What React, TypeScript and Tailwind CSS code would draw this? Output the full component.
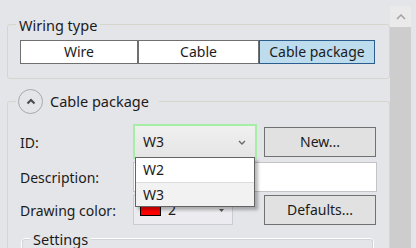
import React from "react";

const font = "font-['Noto_Sans',_sans-serif]";

function Segment({ label, active, w }: { label: string; active?: boolean; w: string }) {
  return (
    <div
      className={`${w} h-[24px] flex items-center justify-center border ${
        active ? "bg-[#bddcee] border-[#2c5d8f]" : "bg-white border-[#707070]"
      }`}
    >
      <span className="leading-none">{label}</span>
    </div>
  );
}

function Btn({ label }: { label: string }) {
  return (
    <div className="w-[112px] h-[30px] flex items-center justify-center border border-[#707070] bg-[#e1e1e1]">
      <span className="leading-none">{label}</span>
    </div>
  );
}

export default function App() {
  return (
    <div className={`w-[416px] h-[248px] bg-[#e4e5e9] flex overflow-hidden text-[14px] text-[#1b1b1b] ${font}`}>
      {/* content */}
      <div className="w-[390px] shrink-0 flex flex-col pt-[24px]">
        {/* Wiring type */}
        <div className="relative shrink-0 ml-[7px] w-[383px] h-[55px] border border-[#d6d6cf] rounded-[3px] pl-[12px] pt-[15px]">
          <div className="absolute left-[8px] top-[-10px] h-[20px] px-[3px] bg-[#e4e5e9] flex items-center">
            <span className="leading-none text-[14.5px]">Wiring type</span>
          </div>
          <div className="flex">
            <Segment label="Wire" w="w-[118px]" />
            <Segment label="Cable" w="w-[121px]" />
            <Segment label="Cable package" active w="w-[116px]" />
          </div>
        </div>

        {/* Cable package */}
        <div className="relative shrink-0 ml-[7px] w-[383px] h-[160px] mt-[22px] border-l border-t border-r border-[#d6d6cf] rounded-t-[3px] pl-[12px] pr-[12px] pt-[22px]">
          <div className="absolute left-[8px] top-[-14px] h-[26px] pl-[2px] pr-[10px] bg-[#e4e5e9] flex items-center gap-[7px]">
            <div className="w-[25px] h-[25px] rounded-full border border-[#a9a9a9] flex items-center justify-center">
              <svg width="10" height="7" viewBox="0 0 10 7">
                <path d="M1.5 5.5 L5 2 L8.5 5.5" fill="none" stroke="#4a4a4a" strokeWidth="2" />
              </svg>
            </div>
            <span className="leading-none text-[14.5px]">Cable package</span>
          </div>

          {/* ID row */}
          <div className="flex items-center h-[35px]">
            <div className="w-[113px] pt-[1px]">ID:</div>
            <div className="relative w-[124px] h-[35px] border-2 border-[#a6eea6] bg-gradient-to-b from-[#f0f0f0] to-[#e5e5e5] flex items-center pl-[8px]">
              <span className="leading-none">W3</span>
              <svg className="absolute right-[9px] top-[14px]" width="8" height="5" viewBox="0 0 8 5">
                <path d="M1 1 L4 4 L7 1" fill="none" stroke="#6a6a6a" strokeWidth="1.4" />
              </svg>
              {/* dropdown */}
              <div className="absolute left-0 top-[31px] w-[120px] h-[50px] z-10 bg-white border border-[#646464] shadow-[3px_3px_3px_rgba(0,0,0,0.28)] flex flex-col">
                <div className="h-[25px] flex items-center pl-[7px] border-b border-[#dcdcdc]">
                  <span className="leading-none">W2</span>
                </div>
                <div className="flex-1 flex items-center pl-[7px] bg-[#f2f2f2]">
                  <span className="leading-none">W3</span>
                </div>
              </div>
            </div>
            <div className="ml-[7px]">
              <Btn label="New..." />
            </div>
          </div>

          {/* Description row */}
          <div className="flex items-center h-[30px] mt-[3px]">
            <div className="w-[113px]">Description:</div>
            <div className="flex-1 h-[30px] bg-white border border-[#c4c4c8]" />
          </div>

          {/* Drawing color row */}
          <div className="flex items-center h-[30px] mt-[3px]">
            <div className="w-[113px]">Drawing color:</div>
            <div className="relative w-[100px] h-[30px] border border-[#cbcbd3] bg-[#ececf0] flex items-center pl-[6px] gap-[7px]">
              <div className="w-[21px] h-[11px] bg-[#ff0000] border border-black mt-[1px]" />
              <span className="leading-none">2</span>
              <svg className="absolute right-[8px] top-[13px]" width="5" height="3" viewBox="0 0 5 3">
                <path d="M0 0 L5 0 L2.5 3 Z" fill="#555" />
              </svg>
            </div>
            <div className="ml-[31px]">
              <Btn label="Defaults..." />
            </div>
          </div>

          {/* Settings */}
          <div className="relative mt-[13px] ml-[1px] mr-[3px] h-[40px] border border-white rounded-[4px]">
            <div className="h-full border-t border-l border-r border-[#d2d3d7] rounded-[3px]" />
            <div className="absolute left-[8px] top-[-10px] h-[20px] px-[3px] bg-[#e4e5e9] flex items-center">
              <span className="leading-none text-[14.5px]">Settings</span>
            </div>
          </div>
        </div>
      </div>

      {/* scrollbar */}
      <div className="w-[21px] shrink-0 flex flex-col pt-[6px]">
        <div className="h-[21px] bg-[#eaeaea] flex items-center justify-center">
          <svg width="10" height="6" viewBox="0 0 10 6">
            <path d="M1 5 L5 1 L9 5" fill="none" stroke="#a3a3a3" strokeWidth="1.5" />
          </svg>
        </div>
        <div className="flex-1 bg-[#cdcdcd]" />
      </div>
    </div>
  );
}
